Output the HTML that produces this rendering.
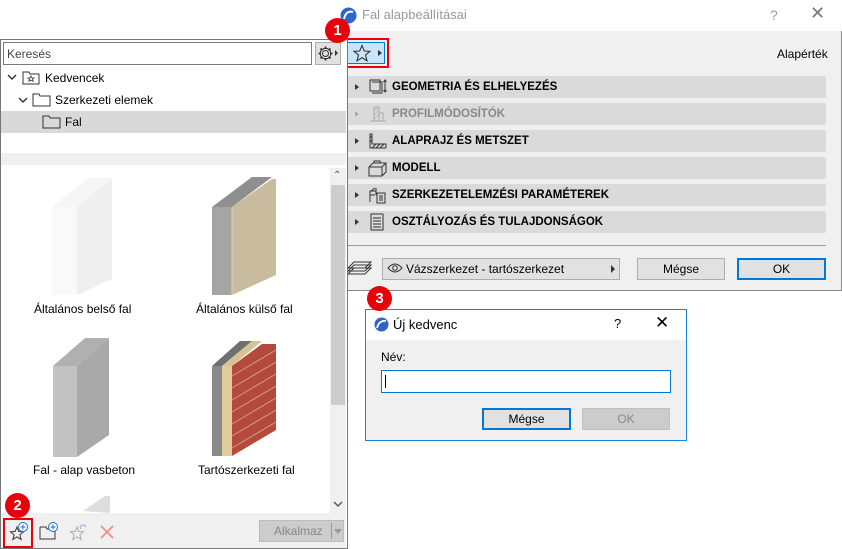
<!DOCTYPE html>
<html><head><meta charset="utf-8"><style>
*{box-sizing:border-box;margin:0;padding:0}
body{width:842px;height:549px;position:relative;background:#fff;font-family:"Liberation Sans",sans-serif;font-size:12px;color:#000;overflow:hidden}
.a{position:absolute}
.badge{position:absolute;width:25px;height:25px;border-radius:50%;background:#e8000b;color:#fff;font-weight:bold;font-size:15px;text-align:center;line-height:25px}
.sec{position:absolute;left:347px;width:479px;height:22px;background:#dadada;border-radius:2px;font-weight:bold;font-size:11.5px;line-height:22px}
.sec .tri{position:absolute;left:8px;top:8px;width:0;height:0;border-left:4px solid #333;border-top:3.5px solid transparent;border-bottom:3.5px solid transparent}
.sec .t{position:absolute;left:45px}
.sec svg{position:absolute;left:20px;top:2px}
.btn{position:absolute;background:#e1e1e1;border:1px solid #adadad;text-align:center;font-size:12px}
</style></head><body>

<!-- Main dialog -->
<div class="a" style="left:331px;top:0;width:511px;height:291px;background:#f0f0f0;border:1px solid #8a8a8a;border-top:none"></div>
<div class="a" style="left:331px;top:0;width:511px;height:31px;background:#fff"></div>
<svg class="a" style="left:340px;top:7px" width="17" height="17"><circle cx="8.5" cy="8.5" r="8" fill="#2f66c6"/><path d="M4 12 Q6 3 13 5" stroke="#fff" stroke-width="2" fill="none"/></svg>
<div class="a" style="left:362px;top:7px;font-size:13px;color:#999">Fal alapbeállításai</div>
<div class="a" style="left:770px;top:7px;font-size:14px;color:#999">?</div>
<div class="a" style="left:810px;top:3px;font-size:18px;color:#777">✕</div>

<div class="a" style="left:343px;top:38px;width:46px;height:30px;border:2px solid #e8000b"></div>
<div class="a" style="left:347px;top:42px;width:38px;height:22px;background:#cce4f7;border:1px solid #0078d7"></div>
<svg class="a" style="left:352px;top:44px" width="20" height="18"><path d="M10 1.5 L12.3 7 L18 7.3 L13.5 11 L15 16.8 L10 13.6 L5 16.8 L6.5 11 L2 7.3 L7.7 7 Z" fill="none" stroke="#333" stroke-width="1.1"/></svg>
<div class="a" style="left:378px;top:50px;border-left:4px solid #333;border-top:3.5px solid transparent;border-bottom:3.5px solid transparent"></div>
<div class="a" style="left:777px;top:47px;font-size:12px">Alapérték</div>

<div class="sec" style="top:76px"><div class="tri"></div><svg width="20" height="18"><rect x="3" y="2" width="10" height="11" fill="none" stroke="#333"/><path d="M5 4h10v11H5" fill="none" stroke="#333"/><path d="M18 2v12M16.5 4l1.5-2 1.5 2M16.5 12l1.5 2 1.5-2" stroke="#333" fill="none"/></svg><span class="t">GEOMETRIA ÉS ELHELYEZÉS</span></div>
<div class="sec" style="top:103px;color:#888"><div class="tri" style="border-left-color:#aaa"></div><svg width="20" height="18"><path d="M7 2h5v14H7zM12 8h4v8h-4M3 16h16" fill="none" stroke="#aaa"/><path d="M7 6l5-4M7 10l5-5M7 14l5-5" stroke="#bbb"/></svg><span class="t">PROFILMÓDOSÍTÓK</span></div>
<div class="sec" style="top:130px"><div class="tri"></div><svg width="20" height="18"><path d="M3 2v14h16M3 16V2h2v10h14v4" fill="none" stroke="#333"/><path d="M3 6l2-2M3 10l2-2M5 16l4-4M9 16l4-4M13 16l4-4" stroke="#333"/></svg><span class="t">ALAPRAJZ ÉS METSZET</span></div>
<div class="sec" style="top:157px"><div class="tri"></div><svg width="20" height="18"><path d="M2 8h13v9H2zM2 8l4-4h13v9l-4 4M15 8l4-4M7 4V2h6v2" fill="none" stroke="#333"/></svg><span class="t">MODELL</span></div>
<div class="sec" style="top:184px"><div class="tri"></div><svg width="20" height="18"><path d="M3 16V5h6M3 9h5M9 2v7M4 5l4-3" fill="none" stroke="#333"/><rect x="10" y="7" width="8" height="10" fill="none" stroke="#333"/><path d="M12 10h4M12 12h4M12 14h4" stroke="#333"/></svg><span class="t">SZERKEZETELEMZÉSI PARAMÉTEREK</span></div>
<div class="sec" style="top:211px"><div class="tri"></div><svg width="20" height="18"><path d="M4 1h12v16H4z" fill="none" stroke="#333"/><path d="M6 5h8M6 8h8M6 11h8M6 14h8" stroke="#333"/></svg><span class="t">OSZTÁLYOZÁS ÉS TULAJDONSÁGOK</span></div>

<div class="a" style="left:347px;top:245px;width:479px;height:1px;background:#999"></div>
<svg class="a" style="left:347px;top:258px" width="26" height="20"><path d="M1 16l6-6h17l-6 6zM1 13l6-6h17l-6 6zM1 10l6-6h17l-6 6z" fill="#f0f0f0" stroke="#333"/></svg>
<div class="a" style="left:382px;top:258px;width:238px;height:22px;background:#e1e1e1;border:1px solid #adadad"></div>
<svg class="a" style="left:387px;top:262px" width="16" height="12"><path d="M1 6Q8-2 15 6Q8 14 1 6Z" fill="none" stroke="#333"/><circle cx="8" cy="6" r="2.3" fill="none" stroke="#333"/></svg>
<div class="a" style="left:406px;top:262px;font-size:12px">Vázszerkezet - tartószerkezet</div>
<div class="a" style="left:611px;top:265px;border-left:4px solid #333;border-top:4px solid transparent;border-bottom:4px solid transparent"></div>
<div class="btn" style="left:637px;top:258px;width:88px;height:22px;line-height:20px">Mégse</div>
<div class="btn" style="left:737px;top:258px;width:89px;height:22px;line-height:18px;border:2px solid #0078d7">OK</div>

<!-- Left panel -->
<div class="a" style="left:0;top:39px;width:348px;height:510px;background:#fff;border:1px solid #777"></div>
<div class="a" style="left:3px;top:42px;width:309px;height:23px;border:1px solid #7a7a7a;background:#fff;padding:4px 3px;color:#444;font-size:12px">Keresés</div>
<div class="a" style="left:315px;top:42px;width:26px;height:23px;background:#e1e1e1;border:1px solid #adadad"></div>
<svg class="a" style="left:317px;top:45px" width="17" height="17"><circle cx="8.5" cy="8.5" r="3" fill="none" stroke="#333"/><path d="M8.5 1.5v2.5M8.5 13v2.5M1.5 8.5h2.5M13 8.5h2.5M3.5 3.5l1.8 1.8M11.7 11.7l1.8 1.8M3.5 13.5l1.8-1.8M11.7 5.3l1.8-1.8" stroke="#333" stroke-width="1.6"/><circle cx="8.5" cy="8.5" r="5.3" fill="none" stroke="#333"/></svg>
<div class="a" style="left:335px;top:50px;border-left:3px solid #333;border-top:3.5px solid transparent;border-bottom:3.5px solid transparent"></div>

<svg class="a" style="left:7px;top:73px" width="10" height="8"><path d="M1 2l4 4 4-4" stroke="#333" fill="none" stroke-width="1.4"/></svg>
<svg class="a" style="left:22px;top:70px" width="18" height="15"><path d="M1 2h6l1 2h9v10H1z" fill="none" stroke="#333"/><path d="M9 6l1 2h2l-1.5 1.3.6 2-2.1-1.2-2.1 1.2.6-2L6 8h2z" fill="none" stroke="#333" stroke-width=".8"/></svg>
<div class="a" style="left:45px;top:71px">Kedvencek</div>
<svg class="a" style="left:18px;top:96px" width="10" height="8"><path d="M1 2l4 4 4-4" stroke="#333" fill="none" stroke-width="1.4"/></svg>
<svg class="a" style="left:32px;top:92px" width="19" height="15"><path d="M1 2h6l1 2h10v10H1z" fill="none" stroke="#333"/></svg>
<div class="a" style="left:55px;top:93px">Szerkezeti elemek</div>
<div class="a" style="left:1px;top:111px;width:345px;height:22px;background:#d9d9d9"></div>
<svg class="a" style="left:42px;top:114px" width="19" height="15"><path d="M1 2h6l1 2h10v10H1z" fill="none" stroke="#333"/></svg>
<div class="a" style="left:65px;top:115px">Fal</div>
<div class="a" style="left:1px;top:153px;width:345px;height:12px;background:#f0f0f0"></div>

<!-- scrollbar -->
<div class="a" style="left:330px;top:168px;width:16px;height:345px;background:#f0f0f0"></div>
<div class="a" style="left:331px;top:185px;width:14px;height:220px;background:#cdcdcd"></div>
<div class="a" style="left:333px;top:170px;font-size:10px;color:#555">⌃</div>
<svg class="a" style="left:333px;top:500px" width="10" height="8"><path d="M1 2l4 4 4-4" stroke="#555" fill="none" stroke-width="1.4"/></svg>

<!-- walls -->
<svg class="a" style="left:50px;top:174px" width="65" height="124"><path d="M2 33L38 4h24v100l-35 17z" fill="#f6f6f6"/><path d="M2 33h25v88H2z" fill="#f9f9f9"/><path d="M27 33L62 5v100l-35 16z" fill="#efefef"/></svg>
<div class="a" style="left:34px;top:302px">Általános belső fal</div>
<svg class="a" style="left:210px;top:174px" width="70" height="124"><path d="M2 33L42 3h20L22 33z" fill="#8f8f8f"/><path d="M2 33h20v88H2z" fill="#a5a5a5"/><path d="M22 33L62 5h4v96l-44 20z" fill="#c9bb9e"/><path d="M22 33v88" stroke="#ded0b0"/></svg>
<div class="a" style="left:196px;top:302px">Általános külső fal</div>
<svg class="a" style="left:50px;top:336px" width="65" height="124"><path d="M3 30L35 2h24L27 30z" fill="#b0b0b0"/><path d="M3 30h24v91H3z" fill="#c2c2c2"/><path d="M27 30L59 2v97l-32 22z" fill="#a9a9a9"/></svg>
<div class="a" style="left:33px;top:463px">Fal - alap vasbeton</div>
<svg class="a" style="left:210px;top:336px" width="70" height="124"><path d="M2 30L30 5h12L12 30z" fill="#6f6f6f"/><path d="M2 30h10v90H2z" fill="#8a8a8a"/><path d="M12 30L42 5h10L22 30z" fill="#d7c294"/><path d="M12 30h10v90H12z" fill="#e0cc9b"/><path d="M22 30L52 8h14v86L22 120z" fill="#b34a3c"/><path d="M22 40L66 14M22 52L66 26M22 64L66 38M22 76L66 50M22 88L66 62M22 100L66 74M22 112L66 86" stroke="#d89a8e" stroke-width="1"/></svg>
<div class="a" style="left:198px;top:463px">Tartószerkezeti fal</div>
<svg class="a" style="left:75px;top:495px" width="35" height="18"><path d="M8 16L30 1h5v17z" fill="#ddd"/></svg>

<!-- bottom toolbar -->
<div class="a" style="left:1px;top:513px;width:345px;height:35px;background:#f0f0f0"></div>
<div class="a" style="left:3px;top:518px;width:30px;height:30px;border:2px solid #e8000b"></div>
<svg class="a" style="left:8px;top:521px" width="22" height="22"><path d="M9 6l1.8 4.5 4.7.3-3.6 3 1.2 4.7L9 15.8l-4.1 2.7 1.2-4.7-3.6-3 4.7-.3z" fill="none" stroke="#333"/><circle cx="15" cy="6" r="4.5" fill="#fff" stroke="#1f6fd6"/><path d="M15 3.5v5M12.5 6h5" stroke="#1f6fd6"/></svg>
<svg class="a" style="left:38px;top:521px" width="22" height="22"><path d="M2 6h6l1 2h4M2 6v12h15v-8" fill="none" stroke="#333"/><circle cx="15" cy="6" r="4.5" fill="#fff" stroke="#1f6fd6"/><path d="M15 3.5v5M12.5 6h5" stroke="#1f6fd6"/></svg>
<svg class="a" style="left:68px;top:521px" width="22" height="22"><path d="M9 6l1.8 4.5 4.7.3-3.6 3 1.2 4.7L9 15.8l-4.1 2.7 1.2-4.7-3.6-3 4.7-.3z" fill="none" stroke="#aaa"/><path d="M12 6q3-4 6 0M18 6l-1-2M12 6l1 2" stroke="#8ab4e8" fill="none"/></svg>
<svg class="a" style="left:99px;top:524px" width="16" height="16"><path d="M2 2l12 12M14 2L2 14" stroke="#f08a80" stroke-width="1.6"/></svg>
<div class="a" style="left:259px;top:520px;width:85px;height:22px;background:#ccc;border:1px solid #bbb;color:#888;font-size:12px;line-height:20px;padding-left:14px">Alkalmaz</div>
<div class="a" style="left:331px;top:523px;width:1px;height:16px;background:#999"></div>
<div class="a" style="left:334px;top:529px;border-top:5px solid #999;border-left:4px solid transparent;border-right:4px solid transparent"></div>

<!-- small dialog -->
<div class="a" style="left:365px;top:309px;width:322px;height:132px;background:#f0f0f0;border:1px solid #1883d7"></div>
<div class="a" style="left:366px;top:310px;width:320px;height:30px;background:#fff"></div>
<svg class="a" style="left:374px;top:317px" width="15" height="15"><circle cx="7.5" cy="7.5" r="7" fill="#2f66c6"/><path d="M3 11Q5 3 12 4" stroke="#fff" stroke-width="1.8" fill="none"/></svg>
<div class="a" style="left:393px;top:317px;font-size:13px">Új kedvenc</div>
<div class="a" style="left:614px;top:316px;font-size:13px">?</div>
<div class="a" style="left:655px;top:313px;font-size:17px">✕</div>
<div class="a" style="left:381px;top:350px;font-size:12px">Név:</div>
<div class="a" style="left:381px;top:370px;width:290px;height:23px;background:#fff;border:1px solid #0078d7"></div>
<div class="a" style="left:385px;top:375px;width:1px;height:13px;background:#000"></div>
<div class="btn" style="left:482px;top:408px;width:89px;height:22px;line-height:18px;border:2px solid #0078d7">Mégse</div>
<div class="btn" style="left:582px;top:408px;width:88px;height:22px;line-height:20px;background:#ccc;border-color:#bfbfbf;color:#888">OK</div>

<div class="badge" style="left:325px;top:18px">1</div>
<div class="badge" style="left:5px;top:493px">2</div>
<div class="badge" style="left:367px;top:286px">3</div>
</body></html>
